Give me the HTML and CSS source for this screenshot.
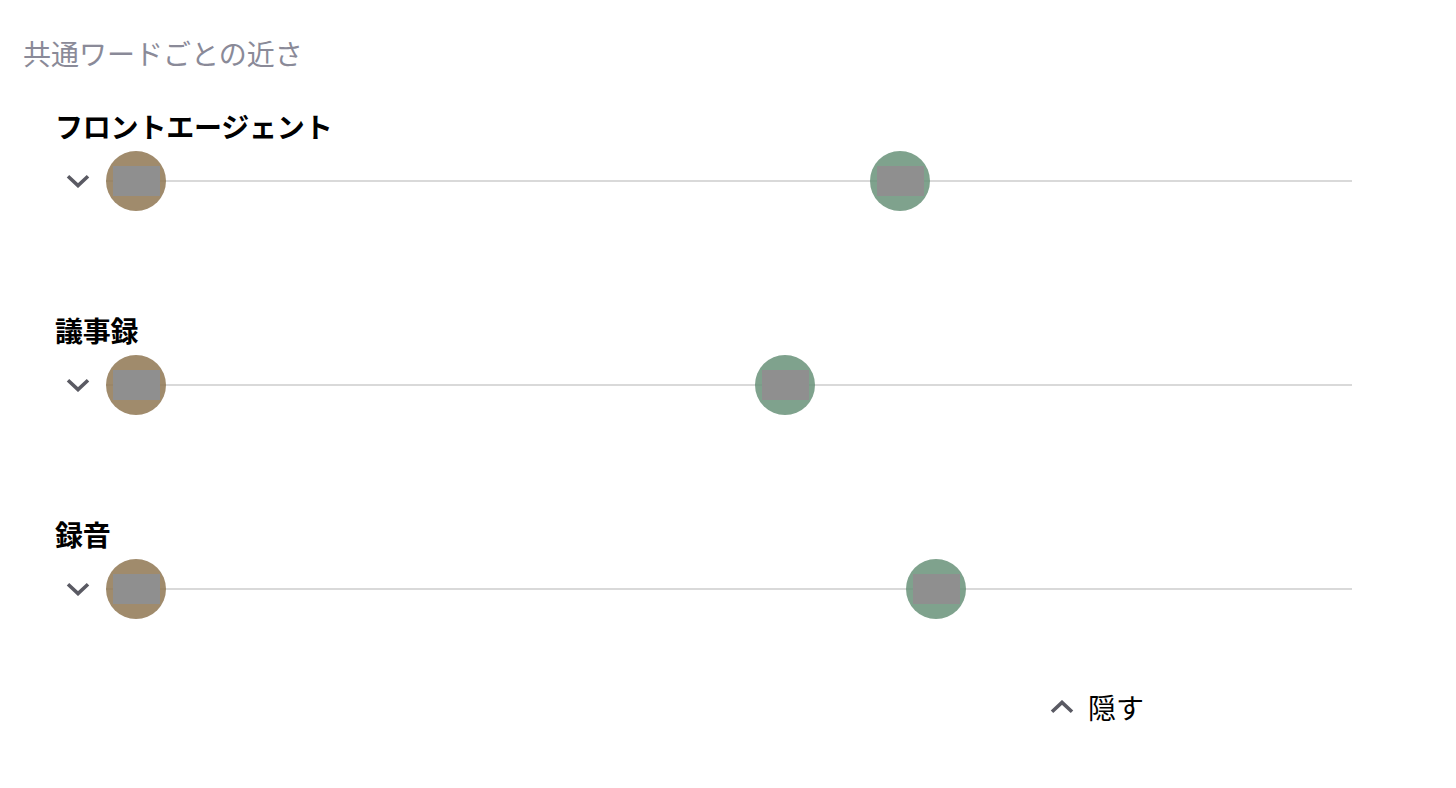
FILE: index.html
```html
<!DOCTYPE html>
<html lang="ja">
<head>
<meta charset="utf-8">
<title>共通ワードごとの近さ</title>
<link rel="stylesheet" href="styles.css">
</head>
<body>
<div class="page">
  <h2 class="title">共通ワードごとの近さ</h2>
  <div class="rows">
    <div class="row">
      <div class="label">フロントエージェント</div>
      <div class="track-row">
        <button class="toggle" aria-label="展開">
          <svg width="24" height="14" viewBox="0 0 24 14"><polyline points="2,2.2 12,11.6 22,2.2" fill="none" stroke="#5a5a63" stroke-width="3.6"/></svg>
        </button>
        <div class="track">
          <div class="dot dot-a" style="left:0px"><span class="thumb"></span></div>
          <div class="dot dot-b" style="left:764px"><span class="thumb"></span></div>
        </div>
      </div>
    </div>
    <div class="row">
      <div class="label">議事録</div>
      <div class="track-row">
        <button class="toggle" aria-label="展開">
          <svg width="24" height="14" viewBox="0 0 24 14"><polyline points="2,2.2 12,11.6 22,2.2" fill="none" stroke="#5a5a63" stroke-width="3.6"/></svg>
        </button>
        <div class="track">
          <div class="dot dot-a" style="left:0px"><span class="thumb"></span></div>
          <div class="dot dot-b" style="left:649px"><span class="thumb"></span></div>
        </div>
      </div>
    </div>
    <div class="row">
      <div class="label">録音</div>
      <div class="track-row">
        <button class="toggle" aria-label="展開">
          <svg width="24" height="14" viewBox="0 0 24 14"><polyline points="2,2.2 12,11.6 22,2.2" fill="none" stroke="#5a5a63" stroke-width="3.6"/></svg>
        </button>
        <div class="track">
          <div class="dot dot-a" style="left:0px"><span class="thumb"></span></div>
          <div class="dot dot-b" style="left:800px"><span class="thumb"></span></div>
        </div>
      </div>
    </div>
  </div>
  <div class="footer">
    <button class="hide">
      <svg width="24" height="14" viewBox="0 0 24 14"><polyline points="2,11.8 12,2.4 22,11.8" fill="none" stroke="#5a5a63" stroke-width="3.6"/></svg>
      <span>隠す</span>
    </button>
  </div>
</div>
</body>
</html>
```

FILE: styles.css
```css
html, body {
  margin: 0;
  padding: 0;
  background: #ffffff;
}

body {
  font-family: "Noto Sans CJK JP", "Noto Sans", sans-serif;
  color: #000000;
}

.page {
  padding: 33px 0 0 23px;
}

.title {
  margin: 0;
  font-size: 28px;
  line-height: 40px;
  font-weight: 400;
  color: #8a8a98;
}

.rows {
  margin-top: 33px;
  padding-left: 32px;
  display: flex;
  flex-direction: column;
  gap: 99px;
}

.row {
  display: flex;
  flex-direction: column;
  gap: 5px;
}

.label {
  font-size: 28px;
  line-height: 40px;
  font-weight: 700;
  letter-spacing: -0.2px;
}

.track-row {
  display: flex;
  align-items: center;
  height: 60px;
}

.toggle {
  margin: 0 0 0 11px;
  padding: 0;
  border: 0;
  background: none;
  width: 24px;
  height: 14px;
  display: flex;
}

.track {
  position: relative;
  margin-left: 16px;
  width: 1246px;
  height: 60px;
}

.track::before {
  content: "";
  position: absolute;
  left: 0;
  right: 0;
  top: 29px;
  height: 2px;
  background: #d9d9d9;
}

.dot {
  position: absolute;
  top: 0;
  width: 60px;
  height: 60px;
  border-radius: 50%;
  display: flex;
  align-items: center;
  justify-content: center;
}

.dot-a {
  background: rgba(143, 119, 82, 0.85);
}

.dot-b {
  background: rgba(104, 146, 121, 0.85);
}

.thumb {
  width: 47px;
  height: 30px;
  background: #8f8f8f;
}

.footer {
  margin-top: 68px;
  display: flex;
  justify-content: flex-end;
  padding-right: 312px;
}

.hide {
  margin: 0;
  padding: 0;
  border: 0;
  background: none;
  display: inline-flex;
  align-items: center;
  gap: 14px;
  font-family: "Noto Sans CJK JP", "Noto Sans", sans-serif;
  font-size: 28px;
  line-height: 40px;
  color: #000000;
}

.hide svg {
  display: block;
}
```
